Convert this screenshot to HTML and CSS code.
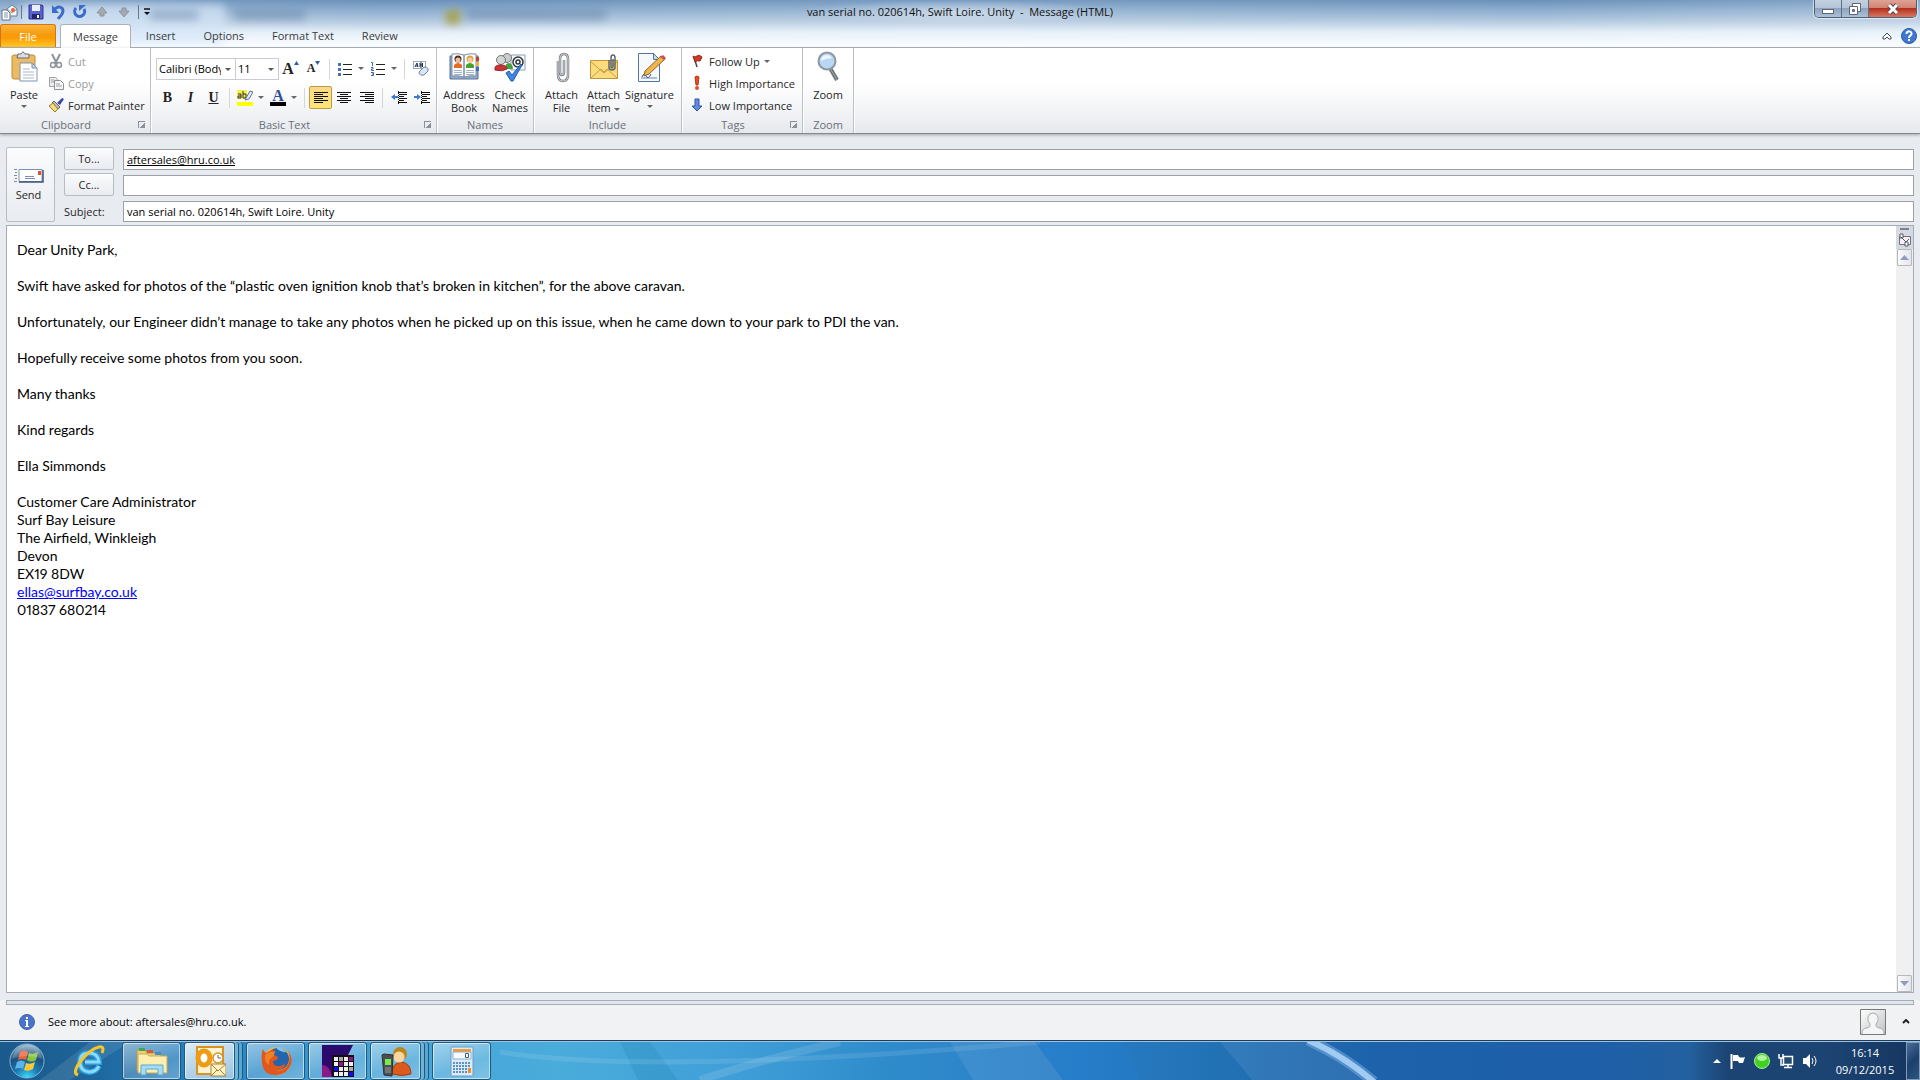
FILE: index.html
```html
<!DOCTYPE html>
<html lang="en">
<head>
    <meta charset="UTF-8">
    <meta name="viewport" content="width=device-width, initial-scale=1.0">
    <title>van serial no. 020614h, Swift Loire. Unity - Message (HTML)</title>
    <link rel="stylesheet" href="styles.css">
</head>
<body>
    <!-- Title bar and tabs -->
    <header class="glass">
        <div class="ghosts" aria-hidden="true">
            <i class="ghost-tab"></i>
            <i class="ghost g1"></i>
            <i class="ghost g2"></i>
            <i class="ghost g3"></i>
            <i class="ghost g4"></i>
        </div>
        <div class="titlebar">
            <div class="qat">
                <svg width="17" height="17" viewBox="0 0 17 17"><path d="M6 5l5-4 5 4v7H6z" fill="#f4f7fa" stroke="#6d7f93"/><path d="M6 5l5 4 5-4" fill="none" stroke="#8c9cae"/><circle cx="12" cy="6" r="2" fill="#e8622c"/><path d="M1 6h5l3 3v7H1z" fill="#fff" stroke="#5f7288"/><path d="M3 9h4M3 11h4M3 13h4" stroke="#8794a4"/></svg>
                <i class="qat-sep"></i>
                <button type="button" class="qat-btn" aria-label="Save"><svg width="16" height="16" viewBox="0 0 16 16"><path d="M1 1h13l1 1v13H1z" fill="#5a60cc" stroke="#30348f"/><path d="M4 1h8v6H4z" fill="#e9f0fb"/><path d="M4 10h8v5H4z" fill="#23266f"/><path d="M9 11h2v3H9z" fill="#fff"/></svg></button>
                <button type="button" class="qat-btn" aria-label="Undo"><svg width="16" height="16" viewBox="0 0 16 16"><path d="M4 6C8 1 13 3 13 7c0 4-3 5-5 8" fill="none" stroke="#3c6cc9" stroke-width="3"/><path d="M2 1v8h7z" fill="#3c6cc9"/></svg></button>
                <button type="button" class="qat-btn" aria-label="Redo"><svg width="16" height="16" viewBox="0 0 16 16"><path d="M4 4a5 5 0 1 0 8 1" fill="none" stroke="#3c6cc9" stroke-width="3"/><path d="M7 7V1h7z" fill="#3c6cc9"/></svg></button>
                <button type="button" class="qat-btn" aria-label="Previous item"><svg width="16" height="16" viewBox="0 0 16 16"><path d="M8 3l5 6h-3v3H6V9H3z" fill="#a7a9b0" stroke="#8e929c"/></svg></button>
                <button type="button" class="qat-btn" aria-label="Next item"><svg width="16" height="16" viewBox="0 0 16 16"><path d="M8 13l5-6h-3V4H6v3H3z" fill="#a7a9b0" stroke="#8e929c"/></svg></button>
                <i class="qat-sep"></i>
                <button type="button" class="qat-more" aria-label="Customize toolbar"><svg width="8" height="8" viewBox="0 0 8 8"><path d="M1 1h6" stroke="#111" stroke-width="1.500"/><path d="M1 4h6L4 7z" fill="#111"/></svg></button>
            </div>
            <h1 class="title">van serial no. 020614h, Swift Loire. Unity&nbsp; -&nbsp; Message (HTML)</h1>
            <div class="window-buttons">
                <button type="button" class="win-btn" aria-label="Minimize"><svg width="14" height="14" viewBox="0 0 14 14"><rect x="1.500" y="7.500" width="11" height="4" fill="#fff" stroke="#5b6576"/></svg></button>
                <button type="button" class="win-btn" aria-label="Restore"><svg width="14" height="14" viewBox="0 0 14 14"><path d="M4.500 1.500h8v8h-8z" fill="#fff" stroke="#5b6576"/><path d="M1.500 4.500h8v8h-8z" fill="#fff" stroke="#5b6576"/><path d="M4.500 7.500h2v2h-2z" fill="#8495ad" stroke="#5b6576"/></svg></button>
                <button type="button" class="win-btn win-close" aria-label="Close"><svg width="14" height="14" viewBox="0 0 14 14"><path d="M3 3l8 8M11 3l-8 8" stroke="#5d4550" stroke-width="5"/><path d="M3 3l8 8M11 3l-8 8" stroke="#fff" stroke-width="3"/></svg></button>
            </div>
        </div>
        <nav class="tabs">
            <button type="button" class="tab tab-file">File</button>
            <button type="button" class="tab tab-active">Message</button>
            <button type="button" class="tab">Insert</button>
            <button type="button" class="tab">Options</button>
            <button type="button" class="tab">Format Text</button>
            <button type="button" class="tab">Review</button>
            <div class="tabs-right">
                <button type="button" class="plain-btn" aria-label="Minimize the ribbon"><svg width="10" height="8" viewBox="0 0 10 8"><path d="M1 5l4-4 4 4v2H7L5 5 3 7H1z" fill="#fff" stroke="#444b57"/></svg></button>
                <button type="button" class="plain-btn" aria-label="Help"><svg width="16" height="16" viewBox="0 0 16 16"><circle cx="8" cy="8" r="7.500" fill="#3f78cf" stroke="#2b5aa8"/><path d="M5.500 6c0-4 5.500-3 5 0C10 8 8 7.500 8 10M8 11v2" fill="none" stroke="#fff" stroke-width="2"/></svg></button>
            </div>
        </nav>
    </header>

    <!-- Ribbon -->
    <section class="ribbon">
        <div class="group group-clipboard">
            <div class="group-body">
                <button type="button" class="big-btn">
                    <svg width="32" height="32" viewBox="0 0 32 32"><rect x="4" y="4" width="23" height="24" rx="2" fill="#ecba60" stroke="#bd8b3c"/><path d="M10 3h3q2-4 4 0h4v4H9z" fill="#d9dde3" stroke="#666c75"/><path d="M12 12h12l5 5v13H12z" fill="#fff" stroke="#7b93b5"/><path d="M24 12v5h5z" fill="#c9d7ea" stroke="#7b93b5"/><path d="M15 18h7M15 21h11M15 24h11M15 27h11" stroke="#a9b9d0"/></svg>
                    <span>Paste</span>
                    <i class="arrow"></i>
                </button>
                <div class="small-col">
                    <button type="button" class="small-btn" disabled><svg width="16" height="16" viewBox="0 0 16 16"><path d="M4 1l5 10M12 1L7 11" stroke="#8f949b" stroke-width="2"/><circle cx="5" cy="12" r="2.500" fill="none" stroke="#8f949b" stroke-width="1.500"/><circle cx="11" cy="12" r="2.500" fill="none" stroke="#8f949b" stroke-width="1.500"/></svg>Cut</button>
                    <button type="button" class="small-btn" disabled><svg width="16" height="16" viewBox="0 0 16 16"><path d="M1.500 2.500h6l2 2v7h-8z" fill="#eee" stroke="#9b9fa6"/><path d="M6.500 5.500h6l3 3v6h-9z" fill="#f6f6f6" stroke="#8d9198"/><path d="M3 5h3M3 7h3M8 9h4M8 11h6" stroke="#9b9fa6"/></svg>Copy</button>
                    <button type="button" class="small-btn"><svg width="16" height="16" viewBox="0 0 16 16"><path d="M9 6l5-5 2 1-4 6z" fill="#4046a8"/><path d="M6 4l6 6-2 2-6-6z" fill="#b9bec9" stroke="#666"/><path d="M1 9l4-3 5 6-3 3z" fill="#f7dc7a" stroke="#9c7a2a"/></svg>Format Painter</button>
                </div>
            </div>
            <div class="group-label"><span>Clipboard</span><button type="button" class="launcher" aria-label="Clipboard options"></button></div>
        </div>

        <div class="group group-text">
            <div class="group-body text-rows">
                <div class="tool-row">
                    <label class="combo combo-font"><select aria-label="Font"><option>Calibri (Body)</option></select></label>
                    <label class="combo combo-size"><select aria-label="Font size"><option>11</option></select></label>
                    <button type="button" class="tool serif grow" aria-label="Grow font">A<svg width="5" height="4" viewBox="0 0 5 4"><path d="M0 4h5L2.500 0z" fill="#2f5da8"/></svg></button>
                    <button type="button" class="tool serif shrink" aria-label="Shrink font">A<svg width="5" height="4" viewBox="0 0 5 4"><path d="M0 0h5L2.500 4z" fill="#2f5da8"/></svg></button>
                    <i class="sep"></i>
                    <button type="button" class="tool split" aria-label="Bullets"><svg width="16" height="16" viewBox="0 0 16 16"><path d="M1 2h3v3H1zM1 7h3v3H1zM1 12h3v3H1z" fill="#4a6fae"/><path d="M6 3.500h9M6 8.500h9M6 13.500h9" stroke="#222"/></svg><i class="arrow"></i></button>
                    <button type="button" class="tool split" aria-label="Numbering"><svg width="16" height="16" viewBox="0 0 16 16"><path d="M1 1.500h1.500V5M1 6.500h2V8H1.500v1.500H4M1 11.500h2.500v3H1M2 13h1" fill="none" stroke="#3f66ab"/><path d="M6 3.500h9M6 8.500h9M6 13.500h9" stroke="#222"/></svg><i class="arrow"></i></button>
                    <i class="sep"></i>
                    <button type="button" class="tool" aria-label="Clear formatting"><svg width="17" height="17" viewBox="0 0 17 17"><rect x="1.500" y="1.500" width="12" height="7" fill="#fff" stroke="#9aa9bd"/><path d="M3 7l2-4 1 4M3.500 6H6M8 3h2l1 1-1 1H8zM8 5h2l1 1-1 1H8z" fill="none" stroke="#1b2e50"/><path d="M7 12l5-5q5 0 4 4l-4 4q-5 1-5-3z" fill="#d9e4f5" stroke="#6d83a8"/></svg></button>
                </div>
                <div class="tool-row">
                    <button type="button" class="tool serif bold">B</button>
                    <button type="button" class="tool serif italic">I</button>
                    <button type="button" class="tool serif underline">U</button>
                    <i class="sep"></i>
                    <button type="button" class="tool split" aria-label="Highlight"><svg width="16" height="17" viewBox="0 0 16 17"><path d="M0 1h10v9H0z" fill="#f6ee4b"/><path d="M0 13h16v4H0z" fill="#ffff00"/><path d="M1 5h3v4H1V7h3M6 2v7h3V5H6" fill="none" stroke="#333"/><path d="M9 9l4-7 3 1-4 7-4 1z" fill="#e1ebf8" stroke="#5d7296"/></svg><i class="arrow"></i></button>
                    <button type="button" class="tool split font-color" aria-label="Font color"><span class="color-a">A</span><i class="arrow"></i></button>
                    <i class="sep"></i>
                    <button type="button" class="tool tool-on" aria-label="Align left"><svg width="16" height="14" viewBox="0 0 16 14"><path d="M1 1.500h14M1 3.500h9M1 5.500h14M1 7.500h9M1 9.500h14M1 11.500h9" stroke="#111"/></svg></button>
                    <button type="button" class="tool" aria-label="Center"><svg width="16" height="14" viewBox="0 0 16 14"><path d="M1 1.500h14M4 3.500h8M1 5.500h14M4 7.500h8M1 9.500h14M4 11.500h8" stroke="#111"/></svg></button>
                    <button type="button" class="tool" aria-label="Align right"><svg width="16" height="14" viewBox="0 0 16 14"><path d="M1 1.500h14M6 3.500h9M1 5.500h14M6 7.500h9M1 9.500h14M6 11.500h9" stroke="#111"/></svg></button>
                    <i class="sep"></i>
                    <button type="button" class="tool" aria-label="Decrease indent"><svg width="16" height="14" viewBox="0 0 16 14"><path d="M7 1.500h9M8 3.500h8M8 5.500h5M8 7.500h8M8 9.500h5M7 11.500h9" stroke="#111"/><path d="M0 6l4-3v2h3v2H4v2z" fill="#3f78cf"/><path d="M7.500 0v14" stroke="#111" stroke-dasharray="1 1"/></svg></button>
                    <button type="button" class="tool" aria-label="Increase indent"><svg width="16" height="14" viewBox="0 0 16 14"><path d="M7 1.500h9M8 3.500h8M8 5.500h5M8 7.500h8M8 9.500h5M7 11.500h9" stroke="#111"/><path d="M7 6L3 3v2H0v2h3v2z" fill="#3f78cf"/><path d="M7.500 0v14" stroke="#111" stroke-dasharray="1 1"/></svg></button>
                </div>
            </div>
            <div class="group-label"><span>Basic Text</span><button type="button" class="launcher" aria-label="Text options"></button></div>
        </div>

        <div class="group group-names">
            <div class="group-body">
                <button type="button" class="big-btn wide">
                    <svg width="32" height="32" viewBox="0 0 32 32"><path d="M2 5h28v23H2z" fill="#8fa9cc" stroke="#5b7396"/><path d="M4 3q6-1 12 1v22q-6-2-12-1zM28 3q-6-1-12 1v22q6-2 12-1z" fill="#fff" stroke="#7c8fab"/><path d="M6 17v-3q4-4 8 0v3z" fill="#ea6a24"/><path d="M18 17v-3q4-4 8 0v3z" fill="#49a02f"/><circle cx="10" cy="8" r="3.500" fill="#4b2e22"/><circle cx="10" cy="9" r="2.500" fill="#f0bd92"/><circle cx="22" cy="8" r="3.500" fill="#d9a636"/><circle cx="22" cy="9" r="2.500" fill="#f5cda4"/><path d="M6 19.500h8M18 19.500h8M6 21.500h8M18 21.500h8M6 23.500h8M18 23.500h8" stroke="#a5b4ca"/><path d="M28 6h3v4h-3z" fill="#d13a2c"/><path d="M28 11h3v4h-3z" fill="#e9b83a"/><path d="M28 16h3v4h-3z" fill="#3c6cc9"/></svg>
                    <span>Address<br>Book</span>
                </button>
                <button type="button" class="big-btn">
                    <svg width="32" height="32" viewBox="0 0 32 32"><path d="M17 4h14v15H17z" fill="#f7fafd" stroke="#8ba0bd"/><circle cx="24" cy="11" r="5" fill="none" stroke="#333" stroke-width="1.500"/><circle cx="24" cy="11" r="2" fill="none" stroke="#333" stroke-width="1.500"/><circle cx="13" cy="7" r="4.500" fill="#c9cbcd" stroke="#777"/><path d="M11 18q0-6 4-6 4 1 4 6z" fill="#43a33b"/><circle cx="7" cy="9" r="4.500" fill="#d4d5d6" stroke="#777"/><path d="M1 19q-1-5 5-5 7 0 7 4-5 3-12 1z" fill="#cc3337" stroke="#94252a"/><path d="M12 22l3-2 3 4 9-11 1 1-9 16h-2z" fill="#3f86e0" stroke="#225bb0"/></svg>
                    <span>Check<br>Names</span>
                </button>
            </div>
            <div class="group-label"><span>Names</span></div>
        </div>

        <div class="group group-include">
            <div class="group-body">
                <button type="button" class="big-btn">
                    <svg width="32" height="32" viewBox="0 0 32 32"><path d="M12 10v14q0 6 5 6t5-6V8q0-5-4-5t-4 5v13q0 3 2 3t2-3V9" fill="none" stroke="#777c84" stroke-width="2.500"/><path d="M12 10v14q0 6 5 6t5-6V8q0-5-4-5t-4 5v13q0 3 2 3t2-3V9" fill="none" stroke="#d6d9dd"/></svg>
                    <span>Attach<br>File</span>
                </button>
                <button type="button" class="big-btn">
                    <svg width="32" height="32" viewBox="0 0 32 32"><path d="M2.500 9.500h27v18h-27z" fill="#fbdc7c" stroke="#c3953b"/><path d="M3 27l10-9 3 3 3-3 10 9M3 11l13 11 13-11" fill="none" stroke="#c99f48"/><path d="M21 9v7q0 3 3 3t3-3V7q0-3-2-3t-2 3v8q0 2 1 2t1-2V8" fill="none" stroke="#5e656f" stroke-width="1.500"/></svg>
                    <span>Attach<br>Item <i class="arrow"></i></span>
                </button>
                <button type="button" class="big-btn wide">
                    <svg width="32" height="32" viewBox="0 0 32 32"><path d="M4.500 2.500h15l6 6v22h-21z" fill="#f6faff" stroke="#58749e"/><path d="M19.500 2.500v6h6z" fill="#c7d8ee" stroke="#58749e"/><path d="M7 27h16" stroke="#6383b0"/><path d="M8 26q2-5 4-1t5-2" fill="none" stroke="#2f4f86"/><path d="M11 20L27 5l4 3-16 15-5 2z" fill="#f0b64b" stroke="#8c6526"/><path d="M26 6l3-2 3 3-2 2z" fill="#d2504c"/></svg>
                    <span>Signature</span>
                    <i class="arrow"></i>
                </button>
            </div>
            <div class="group-label"><span>Include</span></div>
        </div>

        <div class="group group-tags">
            <div class="group-body">
                <div class="small-col">
                    <button type="button" class="small-btn"><svg width="16" height="16" viewBox="0 0 16 16"><path d="M5 4l3 10" stroke="#444" stroke-width="1.500"/><path d="M4 3q2 2 4 0t5 1l-2 4q-3-1-5 1z" fill="#d5371f" stroke="#8f2716"/></svg>Follow Up <i class="arrow"></i></button>
                    <button type="button" class="small-btn"><svg width="16" height="16" viewBox="0 0 16 16"><path d="M6 2q2-2 4 0l-1 8H7z" fill="#e84d23" stroke="#b93414"/><circle cx="8" cy="13" r="2" fill="#e84d23"/></svg>High Importance</button>
                    <button type="button" class="small-btn"><svg width="16" height="16" viewBox="0 0 16 16"><path d="M6 2h4v7h3l-5 5-5-5h3z" fill="#5e8ae2" stroke="#2f54a8"/></svg>Low Importance</button>
                </div>
            </div>
            <div class="group-label"><span>Tags</span><button type="button" class="launcher" aria-label="Tag options"></button></div>
        </div>

        <div class="group group-zoom">
            <div class="group-body">
                <button type="button" class="big-btn">
                    <svg width="32" height="32" viewBox="0 0 32 32"><path d="M18 17l7 12" stroke="#6d7178" stroke-width="4"/><path d="M18 17l7 12" stroke="#a6a9ae"/><circle cx="15" cy="10" r="8.500" fill="#b9d7f5" stroke="#8e969f" stroke-width="2"/><path d="M9 10q0-6 6-6 3 0 5 3-6 0-11 3z" fill="#eef7ff"/></svg>
                    <span>Zoom</span>
                </button>
            </div>
            <div class="group-label"><span>Zoom</span></div>
        </div>
    </section>

    <!-- Message -->
    <main class="message">
        <form class="envelope">
            <button type="button" class="send-btn">
                <svg width="30" height="16" viewBox="0 0 30 16"><path d="M5 1.500h23v12H5z" fill="#fff" stroke="#7a92ba"/><path d="M5 14h24V2" fill="none" stroke="#3f5680" stroke-width="1.500"/><path d="M24 3h3v4h-3z" fill="#e2512d"/><path d="M11 8.500h9M11 10.500h10" stroke="#7a92ba"/><path d="M0 1.500h3M1 4.500h2M0 7.500h3M1 10.500h2M0 13.500h3" stroke="#7d8795"/></svg>
                <span>Send</span>
            </button>
            <div class="fields">
                <button type="button" class="field-btn" id="to-label">To...</button>
                <input type="text" class="field field-to" aria-labelledby="to-label" value="aftersales@hru.co.uk">
                <button type="button" class="field-btn" id="cc-label">Cc...</button>
                <input type="text" class="field" aria-labelledby="cc-label">
                <label for="subject" class="field-label">Subject:</label>
                <input type="text" class="field" id="subject" value="van serial no. 020614h, Swift Loire. Unity">
            </div>
        </form>

        <div class="editor">
            <div class="letter">
                <p>Dear Unity Park,</p>
                <p>Swift have asked for photos of the “plastic oven ignition knob that’s broken in kitchen”, for the above caravan.</p>
                <p>Unfortunately, our Engineer didn’t manage to take any photos when he picked up on this issue, when he came down to your park to PDI the van.</p>
                <p>Hopefully receive some photos from you soon.</p>
                <p>Many thanks</p>
                <p>Kind regards</p>
                <p>Ella Simmonds</p>
                <p>Customer Care Administrator<br>
                Surf Bay Leisure<br>
                The Airfield, Winkleigh<br>
                Devon<br>
                EX19 8DW<br>
                <a href="mailto:ellas@surfbay.co.uk">ellas@surfbay.co.uk</a><br>
                01837 680214</p>
            </div>
            <div class="scrollbar">
                <div class="scroll-tools">
                    <i class="split-handle"></i>
                    <svg width="14" height="14" viewBox="0 0 14 14"><path d="M1.500 3.500h11v8h-11z" fill="#f6f0f4" stroke="#6f747d"/><path d="M2 1h3v4H2zM7 9h3v4H7z" fill="#fff" stroke="#555a63"/><path d="M3 4l5 5 3-3" fill="none" stroke="#555a63"/></svg>
                </div>
                <button type="button" class="scroll-btn" aria-label="Scroll up"><svg width="9" height="5" viewBox="0 0 9 5"><path d="M0 5h9L4.500 0z" fill="#8e9cc4"/></svg></button>
                <div class="scroll-track"></div>
                <button type="button" class="scroll-btn" aria-label="Scroll down"><svg width="9" height="5" viewBox="0 0 9 5"><path d="M0 0h9L4.500 5z" fill="#8e9cc4"/></svg></button>
            </div>
        </div>
    </main>

    <!-- People pane -->
    <div class="people">
        <div class="splitter"></div>
        <div class="people-row">
            <svg width="16" height="16" viewBox="0 0 16 16"><circle cx="8" cy="8" r="7.500" fill="#4a74cc" stroke="#3f63ad"/><path d="M7 3h2v2H7zM6 6h3v6h1v1H6v-1h1V7H6z" fill="#fff"/></svg>
            <span class="people-text">See more about: aftersales@hru.co.uk.</span>
            <svg width="26" height="26" viewBox="0 0 26 26"><defs><linearGradient id="pic" x2="1" y2="1"><stop stop-color="#fff"/><stop offset="1" stop-color="#bfc1c3"/></linearGradient></defs><path d="M.5.5h25v25H.5z" fill="url(#pic)" stroke="#77797b"/><path d="M2 25q0-6 5-6 4-1 3-4-3-3-2-7 1-4 5-4t5 4q1 4-2 7-1 3 3 4 5 0 5 6" fill="#f5f5f5" stroke="#a9abad"/></svg>
            <button type="button" class="plain-btn people-toggle" aria-label="Expand"><svg width="8" height="5" viewBox="0 0 8 5"><path d="M1 4l3-3 3 3" fill="none" stroke="#222" stroke-width="2"/></svg></button>
        </div>
    </div>

    <!-- Taskbar -->
    <footer class="taskbar">
        <svg class="wallpaper" width="100%" height="38" viewBox="0 0 1920 38" preserveAspectRatio="none" aria-hidden="true">
            <path d="M90 0h40L70 38H40z" fill="#fff" opacity=".1"/>
            <path d="M620 0l18 38h40L650 0z" fill="#0a6c96" opacity=".15"/>
            <path d="M500 10q150 24 540-10" fill="none" stroke="#fff" stroke-width="5" opacity=".1"/>
            <path d="M700 38Q760 18 840 0" fill="none" stroke="#fff" stroke-width="8" opacity=".12"/>
            <path d="M950 0h85l28 38h-90z" fill="#fff" opacity=".08"/>
            <path d="M1035 0h90l15 38h-77z" fill="#1f80d8" opacity=".25"/>
            <path d="M1220 0h90l62 38h-120z" fill="#fff" opacity=".08"/>
            <path d="M1308 -2q36 16 66 42" fill="none" stroke="#8fc4f6" stroke-width="11" opacity=".4"/>
            <path d="M1308 -2q36 16 66 42" fill="none" stroke="#bfe0ff" stroke-width="6" opacity=".75"/>
        </svg>
        <button type="button" class="start" aria-label="Start">
            <svg width="36" height="36" viewBox="0 0 36 36"><defs><radialGradient id="orb" cx=".5" cy="1" r="1"><stop stop-color="#3fe0ff"/><stop offset=".35" stop-color="#1b7bb5"/><stop offset=".7" stop-color="#1c4d79"/><stop offset="1" stop-color="#9dbdd3"/></radialGradient></defs><circle cx="18" cy="18" r="17" fill="url(#orb)" stroke="#7fb1d3"/><path d="M11 9q4-3 8 0l-2 8q-4-2-8 0z" fill="#ee6335"/><path d="M20 10q4 2 9-1l-2 8q-5 3-9 0z" fill="#8cc63f"/><path d="M8 19q4-3 8 0l-2 7q-4-2-8 0z" fill="#5eb3ea"/><path d="M17 20q4 2 9-1l-2 7q-5 3-9 1z" fill="#fbc934"/><path d="M3 16Q6 3 18 2t15 14Q18 10 3 16z" fill="#fff" opacity=".2"/></svg>
        </button>
        <button type="button" class="pinned" aria-label="Internet Explorer">
            <svg width="34" height="34" viewBox="0 0 34 34"><path d="M27 22q-3 6-10 6-9-1-9-10T17 9t10 9H13" fill="none" stroke="#2a9be0" stroke-width="6"/><path d="M27 22q-3 6-10 6-9-1-9-10T17 9t10 9H13" fill="none" stroke="#8bdcfb" stroke-width="3"/><path d="M6 31q-6-2 2-13Q18 5 27 3q6-1 3 6" fill="none" stroke="#f6c52c" stroke-width="3"/></svg>
        </button>
        <button type="button" class="task" aria-label="Windows Explorer">
            <svg width="32" height="32" viewBox="0 0 32 32"><path d="M1 5h8l2 3h14v18H1z" fill="#e9cf78" stroke="#b8974a"/><path d="M3 3h6v3H3z" fill="#3fa84c"/><path d="M11 5h6v3h-6z" fill="#d6573c"/><path d="M19 7h6v3h-6z" fill="#3f8fd0"/><path d="M2 9h9l2 2h18v17H2z" fill="#fbeeb0" stroke="#c9a958"/><path d="M5 30V20h22v10h-5v-6H10v6z" fill="#a5dcf5" stroke="#5ba9d4"/></svg>
        </button>
        <button type="button" class="task task-stack task-active" aria-label="Outlook">
            <svg width="32" height="32" viewBox="0 0 32 32"><path d="M3 2h26v27H3z" fill="#fdf3d3" stroke="#d8921d" stroke-width="2"/><ellipse cx="10" cy="13" rx="6" ry="7" fill="#fff" stroke="#ef9b15" stroke-width="5"/><circle cx="24" cy="13" r="5" fill="#fff" stroke="#d8921d" stroke-width="1.500"/><path d="M24 10v3h3" fill="none" stroke="#666"/><path d="M17 19h15v12H17z" fill="#fff4c0" stroke="#a8803a"/><path d="M17 19l7 7 8-7M17 31l6-6M32 31l-6-6" fill="none" stroke="#a8803a"/></svg>
        </button>
        <button type="button" class="task" aria-label="Firefox">
            <svg width="32" height="32" viewBox="0 0 32 32"><circle cx="17" cy="16" r="14" fill="#f2b63a"/><circle cx="18" cy="14" r="11" fill="#2265ae"/><path d="M17 4q5 4 9 3-5-6-9-5z" fill="#7bc5ef"/><path d="M3 4q1 3 3 4 5-4 10-2-3 2-2 4l4 2q0 3-5 4 0 6 7 5 3 0 5-3 0 7-9 7 8 2 12-6 3-7 0-13 5 6 3 13-3 10-14 11Q3 31 2 17 1 9 3 4z" fill="#e2571c"/><path d="M5 10q4-4 10-3l-2 5q-5 2-4 8-5-3-4-10z" fill="#f08127"/></svg>
        </button>
        <button type="button" class="task" aria-label="Caravan system">
            <svg width="32" height="32" viewBox="0 0 32 32"><path d="M0 0h31l-5 10H10v22H0z" fill="#2b0a6d"/><path d="M0 20q8 0 10 12H0z" fill="#8b1a86"/><path d="M10 10h22v22H10z" fill="#111"/><path d="M12 12h4v4h-4zM22 12h4v4h-4zM12 17h4v4h-4zM22 17h4v4h-4zM27 17h4v4h-4zM17 22h4v4h-4zM22 22h4v4h-4zM12 27h4v4h-4zM17 27h4v4h-4zM22 27h4v4h-4z" fill="#eee"/><path d="M17 12h4v4h-4zM27 22h4v4h-4z" fill="#aaa"/><path d="M27 12h4v4h-4zM17 17h4v4h-4z" fill="#8b1a86"/><path d="M12 22h4v4h-4zM27 27h4v4h-4z" fill="#1010ee"/></svg>
        </button>
        <button type="button" class="task task-stack" aria-label="Phone manager">
            <svg width="32" height="32" viewBox="0 0 32 32"><path d="M12 29q0-11 9-12 10 1 10 12-9 3-19 0z" fill="#dc5a1e" stroke="#a33d10"/><circle cx="20" cy="9" r="7" fill="#b9861f"/><circle cx="19" cy="12" r="5.500" fill="#fad7a0"/><path d="M2 10l2-1 9 1-1 21-8-1z" fill="#4b4f52" stroke="#2d3032"/><path d="M5 14h6v6H5z" fill="#7bea50"/><path d="M5 23h6M5 25h6M5 27h6" stroke="#999"/></svg>
        </button>
        <button type="button" class="task" aria-label="Calculator">
            <svg width="32" height="32" viewBox="0 0 32 32"><rect x="5" y="2" width="22" height="29" rx="1" fill="#dcebf7" stroke="#6b9dc6"/><path d="M7 4h18v3H7z" fill="#f39a35"/><path d="M7 7h18v7H7z" fill="#f7fbff" stroke="#8bb0d0"/><path d="M19.500 8.500h3v4h-3z" fill="none" stroke="#44617e"/><path d="M7 18h18M7 21h18M7 24h18M7 27h18" stroke="#5d93c2" stroke-width="2" stroke-dasharray="2 1"/><path d="M22 23h3v5h-3z" fill="#f08a2a"/></svg>
        </button>

        <div class="tray">
            <svg width="10" height="6" viewBox="0 0 10 6"><path d="M1 5h8L5 1z" fill="#fff"/></svg>
            <svg width="16" height="16" viewBox="0 0 16 16"><path d="M1.500 1v15" stroke="#fff" stroke-width="2"/><path d="M3 2h5l1 2q3 1 6 0l-2 6H9L8 8H3z" fill="#fff"/></svg>
            <svg width="16" height="16" viewBox="0 0 16 16"><circle cx="8" cy="8" r="7.500" fill="#3fd31f" stroke="#b4e8a0"/><ellipse cx="8" cy="5" rx="5" ry="3" fill="#b3f59c"/></svg>
            <svg width="16" height="16" viewBox="0 0 16 16"><path d="M5.500 3.500h9v8h-9z" fill="#24496f" stroke="#fff" stroke-width="1.500"/><path d="M6 14.500h8M10 12v2M1 1v4h4V1M3 5v7h3" fill="none" stroke="#fff" stroke-width="1.500"/></svg>
            <svg width="16" height="16" viewBox="0 0 16 16"><path d="M1 5h3l4-4v14l-4-4H1z" fill="#fff"/><path d="M10 5q2 3 0 6M12 3q4 5 0 10" fill="none" stroke="#fff"/></svg>
            <div class="clock">16:14<br>09/12/2015</div>
        </div>
        <button type="button" class="show-desktop" aria-label="Show desktop"></button>
    </footer>
</body>
</html>
```

FILE: styles.css
```css
* {
    box-sizing: border-box;
}

body {
    margin: 0;
    min-height: 100vh;
    display: flex;
    flex-direction: column;
    background: #e8ebf0;
    color: #262626;
    font-family: 'Open Sans', 'Noto Sans', sans-serif;
    font-size: 11px;
    line-height: 13px;
}

button, input, select {
    font: inherit;
    color: inherit;
}

button {
    padding: 0;
    border: 0;
    background: none;
    cursor: pointer;
}

svg {
    display: block;
    flex: none;
}

/* title bar */
.glass {
    position: relative;
    background: linear-gradient(90deg, rgba(255,255,255,.15), rgba(255,255,255,0) 20%, rgba(255,255,255,.1) 50%, rgba(255,255,255,0) 80%, rgba(255,255,255,.2)), linear-gradient(#6a90ba, #86a8cb 8px, #b7cce1 22px, #e4eef8 32px, #fafdff 46px);
}

.ghosts {
    position: absolute;
    inset: 0;
    overflow: hidden;
}

.ghost, .ghost-tab {
    position: absolute;
    filter: blur(4px);
}

.ghost {
    top: 10px;
    height: 10px;
    background: #4f6f95;
    opacity: .4;
}

.ghost-tab {
    left: 20px;
    top: 4px;
    width: 205px;
    height: 40px;
    border-radius: 6px;
    background: #d5e6f8;
    opacity: .7;
}

.g1 {
    left: 150px;
    width: 48px;
}

.g2 {
    left: 235px;
    width: 70px;
}

.g3 {
    left: 446px;
    width: 14px;
    height: 14px;
    background: #a89a2c;
    opacity: .8;
}

.g4 {
    left: 466px;
    width: 140px;
}

.titlebar {
    position: relative;
    display: grid;
    grid-template-columns: 1fr auto 1fr;
    height: 24px;
}

.qat {
    display: flex;
    align-items: center;
    padding-left: 1px;
}

.qat-sep {
    width: 1px;
    height: 14px;
    margin: 0 3px;
    background: #66788e;
}

.qat-btn {
    width: 22px;
    padding-left: 3px;
}

.qat-more {
    padding-left: 1px;
}

.title {
    margin: 0;
    padding: 0 12px;
    font-size: 11px;
    font-weight: 400;
    line-height: 24px;
    color: #111;
    background: radial-gradient(closest-side, rgba(255,255,255,.45), rgba(255,255,255,0));
}

.window-buttons {
    display: flex;
    justify-self: end;
    height: 18px;
    margin-right: 3px;
    border: 1px solid #4c607a;
    border-top: 0;
    border-radius: 0 0 5px 5px;
    box-shadow: 0 0 1px 1px rgba(255,255,255,.6);
    overflow: hidden;
}

.win-btn {
    display: flex;
    align-items: center;
    justify-content: center;
    width: 27px;
    border-right: 1px solid #5d7088;
    background: linear-gradient(#c3d0e0, #b3c3d6 50%, #8ea4bd 50%, #acc1d6);
}

.win-close {
    width: 47px;
    border: 0;
    background: linear-gradient(#dda396, #d0806f 50%, #b5301c 50%, #d67961);
}

/* tabs */
.tabs {
    position: relative;
    display: flex;
    height: 24px;
    border-bottom: 1px solid #aeb3ba;
}

.tab {
    padding: 0 14px;
    color: #3b3b3b;
}

.tab-file {
    width: 56px;
    margin-right: 4px;
    border: 1px solid #d2761a;
    border-bottom: 0;
    border-radius: 3px 3px 0 0;
    background: linear-gradient(#fdb53b, #f79a0c 45%, #fb9d05 60%, #ffc828);
    color: #fff;
}

.tab-active {
    height: 24px;
    margin-right: 1px;
    padding: 0 12px;
    border: 1px solid #aeb3ba;
    border-bottom: 0;
    border-radius: 3px 3px 0 0;
    background: #fff;
}

.tabs-right {
    display: flex;
    align-items: center;
    gap: 9px;
    margin-left: auto;
    padding-right: 3px;
}

/* ribbon */
.ribbon {
    position: relative;
    display: flex;
    height: 86px;
    background: linear-gradient(#fff 40%, #f4f5f7 70%, #e6e9ed);
    border-bottom: 1px solid #85898f;
    box-shadow: 0 1px 3px rgba(0,0,0,.3);
}

.group {
    display: flex;
    flex-direction: column;
    flex: none;
    border-right: 1px solid #bcc0c7;
    box-shadow: 1px 0 #fff;
}

.group-clipboard {
    width: 151px;
}

.group-text {
    width: 286px;
}

.group-names {
    width: 97px;
}

.group-include {
    width: 148px;
}

.group-tags {
    width: 121px;
}

.group-zoom {
    width: 51px;
}

.group-body {
    display: flex;
    justify-content: center;
    height: 68px;
    padding-top: 3px;
}

.group-label {
    display: flex;
    align-items: center;
    height: 16px;
    color: #6a6f78;
}

.group-label span {
    flex: 1;
    text-align: center;
}

.group-label span:not(:last-child) {
    padding-right: 6px;
}

.launcher {
    width: 7px;
    height: 7px;
    margin-right: 5px;
    border-top: 1px solid #8b9099;
    border-left: 1px solid #8b9099;
    background: linear-gradient(135deg, transparent 55%, #8b9099 55%);
}

.arrow {
    display: inline-block;
    flex: none;
    width: 0;
    height: 0;
    border: 3px solid transparent;
    border-top-color: #666;
    border-bottom: 0;
    vertical-align: middle;
}

.big-btn {
    display: flex;
    flex-direction: column;
    align-items: center;
    flex: none;
    width: 42px;
}

.big-btn.wide {
    width: 50px;
}

.big-btn svg {
    margin-bottom: 5px;
}

.big-btn > .arrow {
    margin-top: 4px;
}

.small-col {
    display: flex;
    flex-direction: column;
    margin-top: -1px;
}

.small-btn {
    display: flex;
    align-items: center;
    gap: 4px;
    height: 22px;
    white-space: nowrap;
}

.small-btn:disabled {
    color: #9a9a9a;
}

.group-clipboard .big-btn {
    width: 48px;
}

.group-clipboard .small-col {
    flex: 1;
}

/* font tools */
.text-rows {
    flex-direction: column;
    justify-content: flex-start;
    gap: 6px;
    padding: 9px 0 0 5px;
}

.tool-row {
    display: flex;
    align-items: center;
    height: 23px;
}

.combo {
    position: relative;
    height: 22px;
    background: #fff;
    border: 1px solid #c9ccd2;
}

.combo::after {
    content: "";
    position: absolute;
    right: 4px;
    top: 9px;
    border: 3px solid transparent;
    border-top-color: #555;
    border-bottom: 0;
    pointer-events: none;
}

.combo select {
    width: 100%;
    height: 20px;
    padding: 0 14px 0 2px;
    border: 0;
    appearance: none;
    background: none;
    color: #000;
}

.combo-font {
    width: 80px;
}

.combo-size {
    width: 43px;
    border-left: 0;
}

.tool {
    display: flex;
    align-items: center;
    justify-content: center;
    flex: none;
    width: 23px;
    height: 23px;
}

.split {
    gap: 5px;
    width: 33px;
}

.sep {
    width: 1px;
    height: 20px;
    margin: 0 4px;
    background: #d3d6db;
}

.tool-on {
    border: 1px solid #c29a3e;
    border-radius: 2px;
    background: linear-gradient(#fbd98a, #ffe575);
}

.serif {
    font-family: 'Liberation Serif', serif;
    font-weight: 700;
    color: #222;
}

.grow {
    font-size: 16px;
}

.shrink {
    font-size: 12px;
}

.grow svg, .shrink svg {
    align-self: flex-start;
    margin-top: 4px;
}

.bold, .italic, .underline {
    font-size: 14px;
}

.italic {
    font-style: italic;
}

.underline {
    text-decoration: underline;
}

.color-a {
    width: 16px;
    height: 17px;
    border-bottom: 4px solid #000;
    font-family: 'Liberation Serif', serif;
    font-size: 16px;
    font-weight: 700;
    color: #2f4f8f;
}

/* envelope */
.message {
    display: flex;
    flex-direction: column;
    flex: 1;
    gap: 3px;
    padding: 13px 6px 7px;
}

.envelope {
    display: flex;
    gap: 9px;
}

.send-btn {
    display: flex;
    flex-direction: column;
    align-items: center;
    justify-content: center;
    gap: 4px;
    width: 49px;
    padding-right: 4px;
}

.send-btn, .field-btn {
    border: 1px solid #b9bdc3;
    border-radius: 2px;
    background: linear-gradient(#fbfcfd, #f1f3f6 50%, #e9ecf1);
}

.fields {
    display: grid;
    grid-template-columns: 50px 1fr;
    grid-auto-rows: 23px;
    gap: 3px 9px;
    align-items: end;
    flex: 1;
}

.field-btn {
    height: 23px;
}

.field-label {
    line-height: 21px;
}

.field {
    width: 100%;
    height: 21px;
    padding: 0 3px;
    border: 1px solid #9b9fa6;
    background: #fff;
    color: #000;
}

.field-to {
    text-decoration: underline;
}

/* letter */
.editor {
    display: flex;
    flex: 1;
    background: #fff;
    border: 1px solid #a3adb9;
}

.letter {
    flex: 1;
    padding: 15px 10px;
    color: #000;
    font-family: Lato, Carlito, sans-serif;
    font-size: 14px;
    font-variant-numeric: proportional-nums;
    line-height: 18px;
}

.letter p {
    margin: 0 0 18px;
}

.letter a {
    color: #0000ff;
}

.scrollbar {
    display: flex;
    flex-direction: column;
    align-items: center;
    width: 17px;
    background: #f0f0f1;
}

.scroll-tools {
    display: flex;
    flex-direction: column;
    align-items: center;
    gap: 3px;
    width: 100%;
    height: 23px;
    padding-top: 2px;
    background: #d5dae2;
}

.split-handle {
    width: 9px;
    height: 2px;
    background: #7d828b;
}

.scroll-btn {
    display: flex;
    align-items: center;
    justify-content: center;
    width: 15px;
    height: 17px;
    border: 1px solid #b5b8bd;
    border-radius: 1px;
    background: linear-gradient(90deg, #fafafa, #e5e6e9);
}

.scroll-track {
    flex: 1;
}

/* people pane */
.people {
    background: #f1f2f4;
}

.splitter {
    height: 5px;
    margin: 0 6px;
    border: 1px solid #a3adb9;
    background: #e3e6ea;
}

.people-row {
    display: flex;
    align-items: center;
    height: 35px;
    padding: 0 10px 2px 19px;
    color: #000;
}

.people-text {
    flex: 1;
    margin-left: 13px;
}

.people-toggle {
    margin-left: 16px;
}

/* taskbar */
.taskbar {
    position: relative;
    display: flex;
    align-items: center;
    height: 40px;
    border-top: 1px solid #1f3c5a;
    box-shadow: inset 0 1px #9cc4e2;
    background: linear-gradient(90deg, #1c5a8d, #1d6296 4%, #2580c0 10%, #43a3d8 20%, #4aacdb 29%, #409fd8 38%, #2f8ccb 46%, #2b80c8 54%, #2272b6 63%, #1d62aa 72%, #1d5fa9 83%, #23609f 88%, #1c4473 90%, #1c4473 95%, #15355f);
}

.wallpaper {
    position: absolute;
    left: 0;
    top: 1px;
}

.taskbar button, .tray {
    position: relative;
}

.start {
    margin: 0 20px 0 9px;
}

.pinned {
    width: 57px;
    padding-left: 7px;
}

.task {
    display: flex;
    align-items: center;
    justify-content: center;
    width: 59px;
    height: 38px;
    margin-right: 3px;
    border: 1px solid #1d587f;
    border-radius: 3px;
    box-shadow: inset 0 0 0 1px rgba(255,255,255,.55);
    background: linear-gradient(160deg, rgba(255,255,255,.5), rgba(255,255,255,.2) 60%, rgba(255,255,255,.3));
}

.task-stack {
    width: 51px;
    margin-right: 11px;
    box-shadow: inset 0 0 0 1px rgba(255,255,255,.55), 3px 0 #6fb4d8, 4px 0 #1d587f, 7px 0 #5ba7cf, 8px 0 #1d587f;
}

.task-active {
    background: linear-gradient(160deg, rgba(255,255,255,.85), rgba(255,255,255,.5));
}

.tray {
    display: flex;
    align-items: center;
    gap: 8px;
    margin-left: auto;
    color: #fff;
}

.clock {
    width: 78px;
    line-height: 17px;
    text-align: center;
}

.show-desktop {
    width: 14px;
    height: 38px;
    margin-left: 2px;
    border: 1px solid #7f9cbb;
    background: linear-gradient(135deg, #4a6f97, #1c3f6c 50%, #2d5580);
}
```
